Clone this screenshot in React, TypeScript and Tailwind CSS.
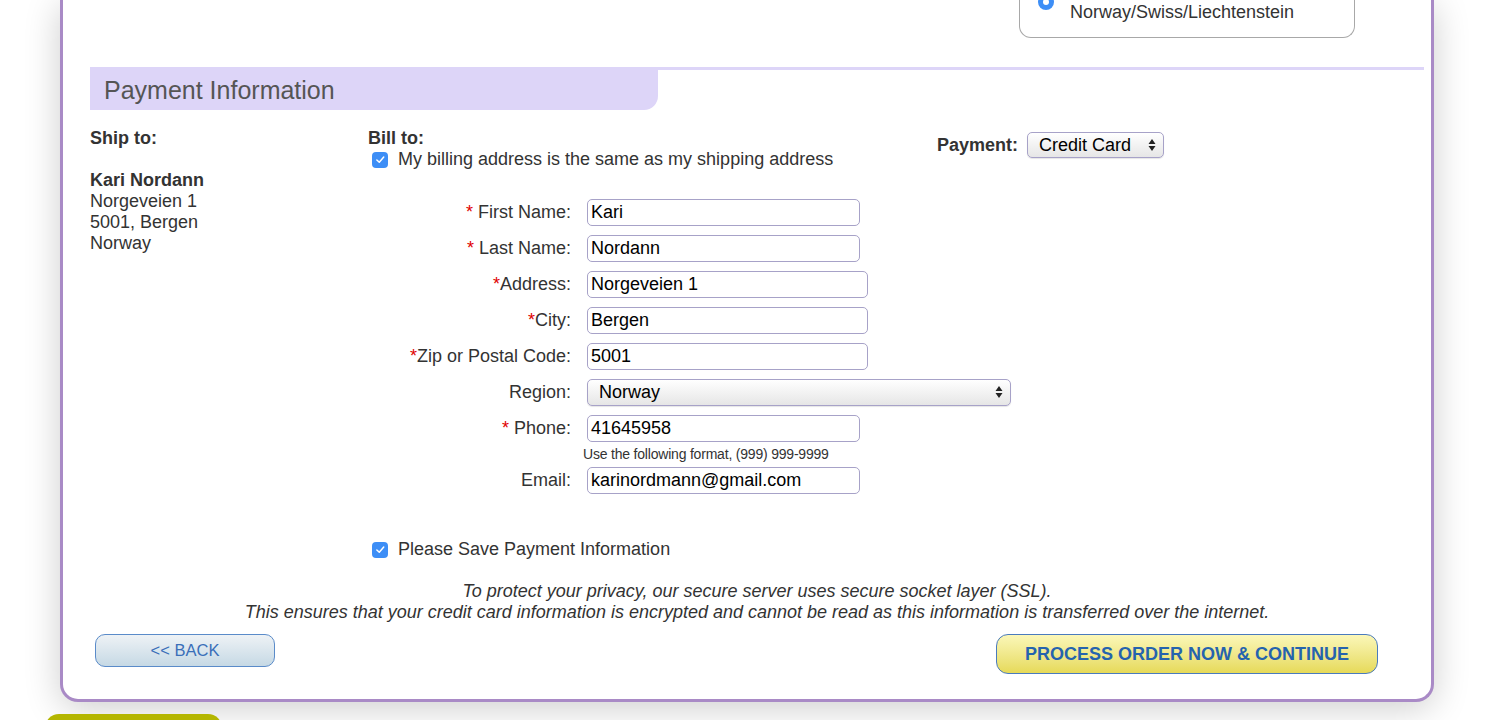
import React from "react";

const PURPLE = "#a98ac6";

function Check() {
  return (
    <span className="flex h-4 w-4 shrink-0 items-center justify-center rounded-[4px] bg-[#3d8ef6]">
      <svg viewBox="0 0 16 16" className="h-[13px] w-[13px]">
        <path d="M3.5 8.5l3 3 5.5-6.5" fill="none" stroke="white" strokeWidth="1.8" strokeLinecap="round" strokeLinejoin="round" />
      </svg>
    </span>
  );
}

function Arrows() {
  return (
    <svg width="8" height="14" viewBox="0 0 8 14" className="shrink-0">
      <path d="M4 1L7.5 6H0.5Z M4 13L0.5 8H7.5Z" fill="#222" />
    </svg>
  );
}

function Field({ label, req, space = true, value, w }: { label: string; req?: boolean; space?: boolean; value: string; w: string }) {
  return (
    <div className="flex h-[36px] items-center">
      <div className="w-[204px] pr-[1px] text-right">
        {req && <span className="text-[#e00000]">*{space ? " " : ""}</span>}
        {label}
      </div>
      <div
        className={`ml-[15px] flex h-[27px] items-center rounded-[5px] border-[1.5px] border-[#a7a2c8] bg-white pl-[3px] text-black ${w}`}
      >
        {value}
      </div>
    </div>
  );
}

export default function App() {
  return (
    <div className="h-[720px] w-[1500px] overflow-hidden bg-white font-['Liberation_Sans',Arial,sans-serif] text-[18px] leading-[21px] text-[#333]">
      <div
        className="ml-[60px] w-[1374px] rounded-b-[18px] border-x-[3px] border-b-[3px] bg-white pb-[25px] shadow-[0_6px_36px_rgba(0,0,0,0.2)]"
        style={{ borderColor: PURPLE }}
      >
        {/* region choice box, top cut off */}
        <div className="flex justify-end pr-[76px]">
          <div className="flex h-[38px] w-[336px] items-start rounded-b-[12px] border-x-[1.5px] border-b-[1.5px] border-[#a8a8a8] pl-[18px]">
            <span className="-mt-[6px] flex h-4 w-4 items-center justify-center rounded-full bg-[#3d8ef6]">
              <span className="h-[6px] w-[6px] rounded-full bg-white" />
            </span>
            <span className="ml-[16px] mt-[2px]">Norway/Swiss/Liechtenstein</span>
          </div>
        </div>

        {/* section header */}
        <div className="ml-[27px] mr-[7px] mt-[29px] border-t-[3px] border-[#ddd5f8]">
          <div className="flex h-[40px] w-[568px] items-center rounded-br-[14px] bg-[#ddd5f8] pl-[14px] text-[25px] text-[#555]">
            Payment Information
          </div>
        </div>

        <div className="ml-[27px] mr-[7px]">
          <div className="mt-[18px] flex">
            <div className="w-[278px]">
              <div className="font-bold">Ship to:</div>
              <div className="mt-[21px] font-bold">Kari Nordann</div>
              <div>Norgeveien 1</div>
              <div>5001, Bergen</div>
              <div>Norway</div>
            </div>

            <div className="flex-1">
              <div className="flex">
                <div className="w-[569px]">
                  <div className="font-bold">Bill to:</div>
                  <label className="ml-[4px] flex items-center gap-[10px]">
                    <Check />
                    My billing address is the same as my shipping address
                  </label>
                </div>
                <div className="mt-[4px] flex h-[26px] items-center gap-[9px]">
                  <span className="font-bold">Payment:</span>
                  <div className="flex h-[26px] w-[137px] items-center justify-between rounded-[5px] border-[1.5px] border-[#a7a2c8] bg-gradient-to-b from-white to-[#e6e6e6] pl-[11px] pr-[7px] text-black shadow-[0_1px_1px_rgba(0,0,0,0.1)]">
                    Credit Card
                    <Arrows />
                  </div>
                </div>
              </div>

              <div className="mt-[24px]">
                <Field req label="First Name:" value="Kari" w="w-[273px]" />
                <Field req label="Last Name:" value="Nordann" w="w-[273px]" />
                <Field req space={false} label="Address:" value="Norgeveien 1" w="w-[281px]" />
                <Field req space={false} label="City:" value="Bergen" w="w-[281px]" />
                <Field req space={false} label="Zip or Postal Code:" value="5001" w="w-[281px]" />
                <div className="flex h-[36px] items-center">
                  <div className="w-[204px] pr-[1px] text-right">Region:</div>
                  <div className="ml-[15px] flex h-[27px] w-[424px] items-center justify-between rounded-[5px] border-[1.5px] border-[#a7a2c8] bg-gradient-to-b from-white to-[#e6e6e6] pl-[11px] pr-[7px] text-black shadow-[0_1px_1px_rgba(0,0,0,0.1)]">
                    Norway
                    <Arrows />
                  </div>
                </div>
                <Field req label="Phone:" value="41645958" w="w-[273px]" />
                <div className="flex h-[16px] items-center pl-[215px] text-[14px] tracking-[-0.2px]">
                  Use the following format, (999) 999-9999
                </div>
                <Field label="Email:" value="karinordmann@gmail.com" w="w-[273px]" />
              </div>

              <label className="ml-[4px] mt-[41px] flex items-center gap-[10px]">
                <Check />
                Please Save Payment Information
              </label>
            </div>
          </div>

          <div className="mt-[21px] text-center italic">
            <div>To protect your privacy, our secure server uses secure socket layer (SSL).</div>
            <div>
              This ensures that your credit card information is encrypted and cannot be read as this information is
              transferred over the internet.
            </div>
          </div>

          <div className="ml-[5px] mr-[46px] mt-[11px] flex items-start justify-between">
            <button className="flex h-[33px] w-[180px] items-center justify-center rounded-[10px] border-[1.5px] border-[#5a8bc9] bg-gradient-to-b from-[#eef2f5] to-[#c6d9e5] text-[16.5px] text-[#3a6fb9]">
              &lt;&lt; BACK
            </button>
            <button className="flex h-[40px] w-[382px] items-center justify-center rounded-[12px] border-[1.5px] border-[#4a7bbd] bg-gradient-to-b from-[#fbf7b8] to-[#e6da58] text-[18px] font-bold text-[#2563ae]">
              PROCESS ORDER NOW &amp; CONTINUE
            </button>
          </div>
        </div>
      </div>

      <div className="ml-[45px] mt-[12px] h-[20px] w-[177px] rounded-t-[14px] bg-[#b4b600]" />
    </div>
  );
}
